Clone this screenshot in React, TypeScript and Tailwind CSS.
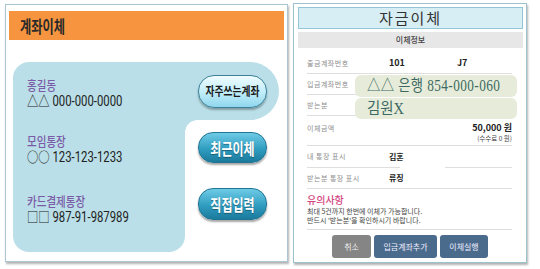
import React from "react";

const KR = { fontFamily: "'Noto Sans CJK KR', 'Noto Sans', sans-serif" };
const NUM = { fontFamily: "Roboto, 'Noto Sans CJK KR', sans-serif" };
const SERIF = { fontFamily: "'Liberation Serif', 'Noto Sans CJK KR', serif" };

function AccountText({ name, num }: { name: string; num: string }) {
  return (
    <div className="origin-left scale-x-[0.81] whitespace-nowrap" style={KR}>
      <div className="text-[13px] leading-[17px] text-[#7a5ca6] font-medium">{name}</div>
      <div className="text-[14px] leading-[17px] text-[#222]" style={NUM}>{num}</div>
    </div>
  );
}

function Row({ label, children, h = "h-[21px]" }: { label: string; children?: React.ReactNode; h?: string }) {
  return (
    <div className={`flex items-center border-b border-[#dedede] ${h}`}>
      <div className="w-[82px] text-[7px] text-[#8d8d8d] tracking-[0.5px]">{label}</div>
      <div className="flex-1 flex items-center">{children}</div>
    </div>
  );
}

export default function App() {
  return (
    <div className="w-[540px] h-[269px] bg-white flex" style={KR}>
      {/* Left panel */}
      <div className="ml-[5px] mt-[4px] w-[283px] h-[258px] border border-[#a9c6d2] shadow-[1px_2px_2px_rgba(0,0,0,0.3)] flex flex-col">
        <div className="ml-[3px] mt-[6px] w-[275px] h-[29px] bg-[#f7943f] flex items-center pl-[11px]">
          <span className="origin-left scale-x-[0.72] text-[17px] font-bold text-[#2a2a2a] whitespace-nowrap">계좌이체</span>
        </div>
        {/* blue area top row */}
        <div className="ml-[7px] mt-[22px] w-[266px] h-[58px] bg-[#badfe8] rounded-tl-[16px] rounded-r-[29px] flex">
          <div className="w-[172px] pl-[14px] pt-[14px]">
            <AccountText name="홍길동" num="△△ 000-000-0000" />
          </div>
          <div className="ml-[13px] mt-[13px]">
            <div className="w-[69px] h-[33px] rounded-[16px] border-[1.5px] border-[#3d8098] bg-[linear-gradient(#effcff,#c4eef9_50%,#8fd7ee)] shadow-[0_2px_2px_rgba(0,0,0,0.3)] flex items-center justify-center">
              <span className="scale-x-[0.78] text-[12.5px] font-bold text-[#1b1b1b] whitespace-nowrap">자주쓰는계좌</span>
            </div>
          </div>
        </div>
        {/* blue area lower */}
        <div className="ml-[7px] flex">
          <div className="w-[172px] h-[132px] bg-[#badfe8] rounded-b-[16px] pl-[14px]">
            <div className="pt-[12px]">
              <AccountText name="모임통장" num="○○ 123-123-1233" />
            </div>
            <div className="pt-[26px]">
              <AccountText name="카드결제통장" num="□□ 987-91-987989" />
            </div>
          </div>
          <div className="relative pl-[13px]">
            <div className="absolute left-0 top-0 w-[12px] h-[12px] bg-[radial-gradient(circle_at_100%_100%,transparent_11.5px,#badfe8_12px)]" />
            <div className="mt-[12px] w-[69px] h-[31px] rounded-[15px] bg-[linear-gradient(#6fcbe6,#2f9dc0_55%,#1b7a9c)] border border-[#1f7594] shadow-[0_2px_2px_rgba(0,0,0,0.35)] flex items-center justify-center">
              <span className="scale-x-[0.75] text-[16px] font-bold text-white whitespace-nowrap [text-shadow:0_1px_1px_rgba(0,0,0,0.35)]">최근이체</span>
            </div>
            <div className="mt-[25px] w-[69px] h-[32px] rounded-[15px] bg-[linear-gradient(#6fcbe6,#2f9dc0_55%,#1b7a9c)] border border-[#1f7594] shadow-[0_2px_2px_rgba(0,0,0,0.35)] flex items-center justify-center">
              <span className="scale-x-[0.75] text-[16px] font-bold text-white whitespace-nowrap [text-shadow:0_1px_1px_rgba(0,0,0,0.35)]">직접입력</span>
            </div>
          </div>
        </div>
      </div>

      {/* Right panel */}
      <div className="ml-[5px] mt-[3px] w-[234px] h-[260px] border border-[#9cc2ce] shadow-[1px_2px_2px_rgba(0,0,0,0.3)] flex flex-col">
        <div className="ml-[4px] mr-[3px] mt-[3px] h-[22px] bg-[#d7eef5] border border-[#93c6d5] flex items-center justify-center">
          <span className="text-[15px] text-[#333] tracking-[2px]">자금이체</span>
        </div>
        <div className="ml-[4px] mr-[3px] mt-[3px] h-[16px] bg-[#e7e7e7] flex items-center justify-center">
          <span className="text-[8px] font-medium text-[#444]">이체정보</span>
        </div>
        <div className="relative ml-[13px] w-[205px] pt-[5px]">
          <Row label="출금계좌번호">
            <span className="text-[9px] font-bold text-[#222] w-[68px]">101</span>
            <span className="text-[9px] font-bold text-[#222]">J7</span>
          </Row>
          <Row label="입금계좌번호" />
          <Row label="받는분" />
          <div className="flex items-start border-b border-[#dedede] h-[30px] pt-[6px]">
            <div className="w-[82px] text-[7px] text-[#8d8d8d] tracking-[0.5px] leading-[10px] mt-[1px]">이체금액</div>
            <div className="flex-1 flex flex-col items-end">
              <span className="text-[9px] font-bold text-[#222] leading-[11px]">50,000 원</span>
              <span className="text-[6.5px] text-[#444] leading-[8px] mt-[1px]">(수수료 0 원)</span>
            </div>
          </div>
          <div className="flex items-center h-[21px]">
            <div className="w-[82px] text-[7px] text-[#8d8d8d] tracking-[0.5px]">내 통장 표시</div>
            <span className="text-[8px] font-bold text-[#222]">김혼</span>
          </div>
          <div className="flex">
            <div className="w-[93px] h-px bg-[#dedede]" />
            <div className="w-[45px]" />
            <div className="w-[67px] h-px bg-[#dedede]" />
          </div>
          <Row label="받는분 통장 표시">
            <span className="text-[8px] font-bold text-[#222]">류징</span>
          </Row>
          <div className="h-[41px] border-b border-[#dedede] pt-[4px]">
            <div className="text-[10px] font-medium text-[#d4477f] leading-[13px]">유의사항</div>
            <div className="text-[7px] text-[#444] leading-[9px] mt-[1px]">최대 5건까지 한번에 이체가 가능합니다.</div>
            <div className="text-[7px] text-[#444] leading-[9px]">반드시 '받는분'을 확인하시기 바랍니다.</div>
          </div>

          {/* overlay boxes */}
          <div className="absolute left-[48px] top-[27px] w-[162px] flex flex-col gap-px">
            <div className="h-[22px] rounded-[6px] bg-[#e6ecd9] flex items-center pl-[12px]">
              <span className="origin-left scale-x-[0.83] text-[16px] text-[#3c6a63] whitespace-nowrap tracking-[0.5px]" style={SERIF}>△△ 은행 854-000-060</span>
            </div>
            <div className="h-[21px] rounded-[6px] bg-[#e6ecd9] flex items-center pl-[12px]">
              <span className="origin-left scale-x-[0.9] text-[16px] text-[#3c6a63] whitespace-nowrap" style={SERIF}>김원X</span>
            </div>
          </div>
        </div>
        <div className="mt-[5px] flex justify-center gap-[3px]">
          <div className="w-[39px] h-[23px] rounded-[3px] bg-[#858585] flex items-center justify-center text-[8px] text-[#eee]">취소</div>
          <div className="w-[63px] h-[23px] rounded-[3px] bg-[#4b6b8d] flex items-center justify-center text-[8px] text-[#eef]">입금계좌추가</div>
          <div className="w-[48px] h-[23px] rounded-[3px] bg-[#4b6b8d] flex items-center justify-center text-[8px] text-[#eef]">이체실행</div>
        </div>
      </div>
    </div>
  );
}
